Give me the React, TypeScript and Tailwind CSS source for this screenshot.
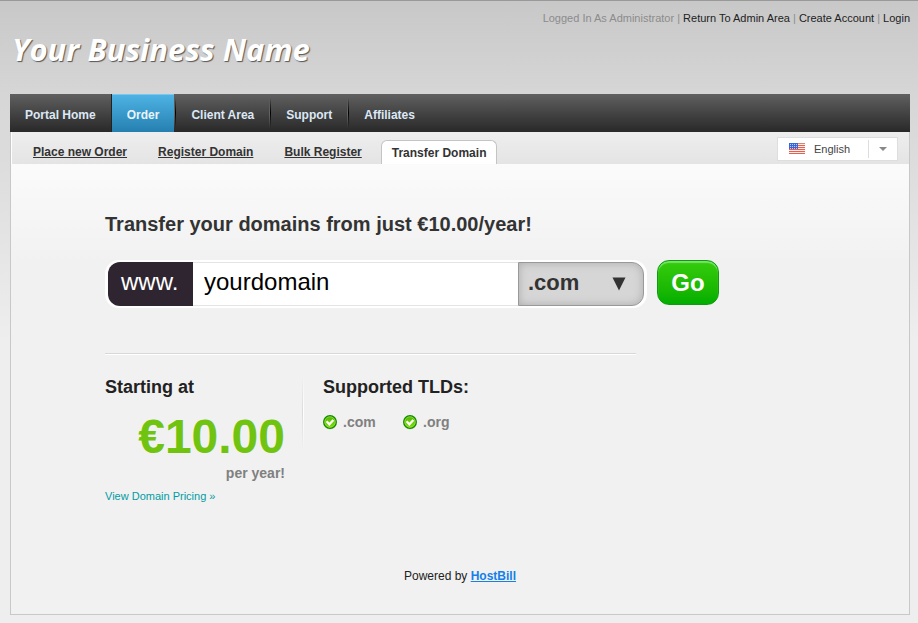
import React from "react";

const navItems = ["Portal Home", "Order", "Client Area", "Support", "Affiliates"];
const subItems = ["Place new Order", "Register Domain", "Bulk Register"];

function FlagIcon() {
  return (
    <svg width="16" height="11" viewBox="0 0 16 11" aria-hidden="true" shapeRendering="crispEdges">
      <rect width="16" height="11" fill="#fdeeee" />
      {[0, 2, 4, 6, 8, 10].map((y) => (
        <rect key={y} y={y} width="16" height="1" fill={y === 0 ? "#c98a80" : "#e8604c"} />
      ))}
      <rect width="9" height="6" fill="#3a66d8" />
      {[1, 3, 5].map((y) =>
        [1, 3, 5, 7].map((x) => (
          <rect key={`${x}-${y}`} x={x} y={y} width="1" height="1" fill="#b9cbf6" />
        )),
      )}
    </svg>
  );
}

function CheckIcon() {
  return (
    <svg width="14" height="15" viewBox="0 0 14 15" aria-hidden="true">
      <defs>
        <linearGradient id="tick" x1="0" y1="0" x2="0" y2="1">
          <stop offset="0" stopColor="#4fb507" />
          <stop offset="1" stopColor="#7fe000" />
        </linearGradient>
      </defs>
      <circle cx="7" cy="7.8" r="6.8" fill="#c9dcbb" />
      <circle cx="7" cy="7" r="6.3" fill="url(#tick)" stroke="#138a05" strokeWidth="1.3" />
      <circle cx="7" cy="7" r="5.2" fill="none" stroke="#9be04a" strokeWidth="0.7" />
      <path d="M3.6 6.2 L6.4 9.2 L10.4 5" fill="none" stroke="#fff" strokeWidth="2.3" />
    </svg>
  );
}

function Header() {
  return (
    <header className="flex h-[93px] items-start justify-between pr-2 pl-3">
      <h1 className="pt-6 font-['Open_Sans',sans-serif] text-[31px] leading-[48px] font-bold whitespace-nowrap text-white italic [text-shadow:1px_1px_1px_#555]">
        Your Business Name
      </h1>
      <p className="pt-[9px] text-[11px] leading-4 whitespace-nowrap text-[#8c8c8c]">
        Logged In As Administrator |{" "}
        <a href="#admin" className="text-[#222]">Return To Admin Area</a> |{" "}
        <a href="#create" className="text-[#222]">Create Account</a> |{" "}
        <a href="#login" className="text-[#222]">Login</a>
      </p>
    </header>
  );
}

function MainNav() {
  return (
    <nav aria-label="Main" className="mr-2 ml-2.5 flex h-[38px] bg-linear-to-b from-[#606060] to-[#292929] text-xs font-bold">
      {navItems.map((item) => (
        <div key={item} className="flex">
          <a
            href="#nav"
            className={
              item === "Order"
                ? "flex items-center border-t border-[#79c8ea] bg-linear-to-b from-[#4db3e4] to-[#2580b0] px-[15px] pt-[3px] text-[#e8f4fc]"
                : "flex items-center px-[15px] pt-1 text-[#dce8f5]"
            }
          >
            {item}
          </a>
          {item !== "Affiliates" && item !== "Portal Home" && (
            <span className="my-1 flex w-0.5">
              <span className="w-px bg-linear-to-b from-transparent via-[#666] to-transparent" />
              <span className="w-px bg-linear-to-b from-transparent via-black to-transparent" />
            </span>
          )}
          {item === "Portal Home" && <span className="w-px bg-[#222]" />}
        </div>
      ))}
    </nav>
  );
}

function LanguagePicker() {
  return (
    <div className="relative mt-[5px] mr-[11px] h-6 w-[121px] border border-[#dedede] bg-white">
      <span className="pointer-events-none absolute top-[5px] left-[11px]">
        <FlagIcon />
      </span>
      <select
        aria-label="Language"
        className="block h-full w-full appearance-none bg-transparent pl-9 text-[11px] text-[#444] outline-none"
      >
        <option>English</option>
      </select>
      <span className="pointer-events-none absolute inset-y-0.5 right-0 flex w-[29px] items-center justify-center border-l border-[#ddd]">
        <svg width="8" height="4" viewBox="0 0 8 4" aria-hidden="true">
          <path d="M0 0H8L4 4Z" fill="#888" />
        </svg>
      </span>
    </div>
  );
}

function SubNav() {
  return (
    <div className="flex h-8 items-start justify-between border-l border-white bg-linear-to-b from-[#eee] to-[#e4e4e4]">
      <nav aria-label="Order" className="flex items-end self-end text-xs leading-4 font-bold text-[#333]">
        <div className="flex gap-[31px] pr-[19px] pb-1 pl-[21px]">
          {subItems.map((item) => (
            <a key={item} href="#sub" className="underline">{item}</a>
          ))}
        </div>
        <a href="#transfer" aria-current="page" className="h-6 rounded-t-md border border-b-0 border-[#c4c4c4] bg-white px-2.5 pt-1">
          Transfer Domain
        </a>
      </nav>
      <LanguagePicker />
    </div>
  );
}

function DomainForm() {
  return (
    <form className="mt-[22px] flex items-start gap-2.5" onSubmit={(e) => e.preventDefault()}>
      <div className="flex h-12 w-[542px] rounded-[14px] border-x-[3px] border-y-2 border-white bg-white">
        <label
          htmlFor="domain"
          className="flex w-[85px] items-center rounded-l-xl bg-[#2f2530] pb-1 pl-[13px] text-2xl text-white"
        >
          www.
        </label>
        <input
          id="domain"
          defaultValue="yourdomain"
          className="min-w-0 flex-1 border-y border-[#e4e4e4] bg-white pb-1 pl-[11px] text-2xl text-black outline-none"
        />
        <div className="relative w-[126px]">
          <select
            aria-label="Extension"
            className="h-full w-full appearance-none rounded-r-xl border border-[#999] bg-[#d6d6d6] pb-1 pl-[9px] text-[22px] font-bold text-[#333] shadow-[inset_0_0_8px_#aaa] outline-none"
          >
            <option>.com</option>
          </select>
          <svg className="pointer-events-none absolute top-[15px] right-[18px]" width="14" height="14" viewBox="0 0 14 14" aria-hidden="true">
            <path d="M0.5 0.5H13.5L7 13.5Z" fill="#333" />
          </svg>
        </div>
      </div>
      <button
        type="submit"
        className="h-[45px] w-[62px] rounded-xl border border-[#109c10] bg-linear-to-b from-[#34cc0c] to-[#00ae00] text-2xl font-bold text-white shadow-[inset_0_2px_1px_#78e268]"
      >
        Go
      </button>
    </form>
  );
}

function Pricing() {
  return (
    <div className="mt-5 flex">
      <section className="w-[197px]">
        <h3 className="text-lg leading-6 font-bold text-[#222]">Starting at</h3>
        <div className="pt-2.5 pr-[17px] text-right font-bold">
          <p className="text-5xl leading-[56px] text-[#70c410]">€10.00</p>
          <p className="text-sm leading-4 text-[#808080]">per year!</p>
        </div>
        <a href="#pricing" className="mt-[7px] block text-[11px] leading-4 text-[#009ca4]">
          View Domain Pricing »
        </a>
      </section>
      <div className="flex h-[76px] w-0.5">
        <span className="w-px bg-linear-to-b from-transparent via-[#dcdcdc] to-transparent" />
        <span className="w-px bg-linear-to-b from-transparent via-white to-transparent" />
      </div>
      <section className="pl-[19px]">
        <h3 className="text-lg leading-6 font-bold text-[#222]">Supported TLDs:</h3>
        <ul className="mt-[13px] flex text-sm leading-5 font-bold text-[#808080]">
          {[".com", ".org"].map((tld) => (
            <li key={tld} className="flex w-20 items-center gap-1.5">
              <CheckIcon />
              {tld}
            </li>
          ))}
        </ul>
      </section>
    </div>
  );
}

export default function App() {
  return (
    <div className="flex min-h-screen flex-col border-t border-[#999] bg-[#eee] bg-[linear-gradient(#c8c8c8,#d6d6d6_94px,#eee_340px)] pb-2 font-['Liberation_Sans',Arial,sans-serif]">
      <Header />
      <MainNav />
      <div className="mr-2 ml-2.5 flex flex-1 flex-col border-x border-b border-[#c8c8c8]">
        <SubNav />
        <main className="flex flex-1 flex-col bg-[#f1f1f1] bg-[linear-gradient(#fbfbfb,#f1f1f1_100px)] pl-[94px]">
          <h2 className="mt-[46px] text-xl leading-7 font-bold text-[#333]">
            Transfer your domains from just €10.00/year!
          </h2>
          <DomainForm />
          <hr className="mt-[45px] h-0.5 w-[531px] border-t border-b border-t-[#d8d8d8] border-b-white" />
          <Pricing />
        </main>
        <footer className="bg-[#f1f1f1] pt-7 pb-[30px] text-center text-xs leading-4 text-[#222]">
          Powered by{" "}
          <a href="#hostbill" className="font-bold text-[#1480e8] underline">HostBill</a>
        </footer>
      </div>
    </div>
  );
}
